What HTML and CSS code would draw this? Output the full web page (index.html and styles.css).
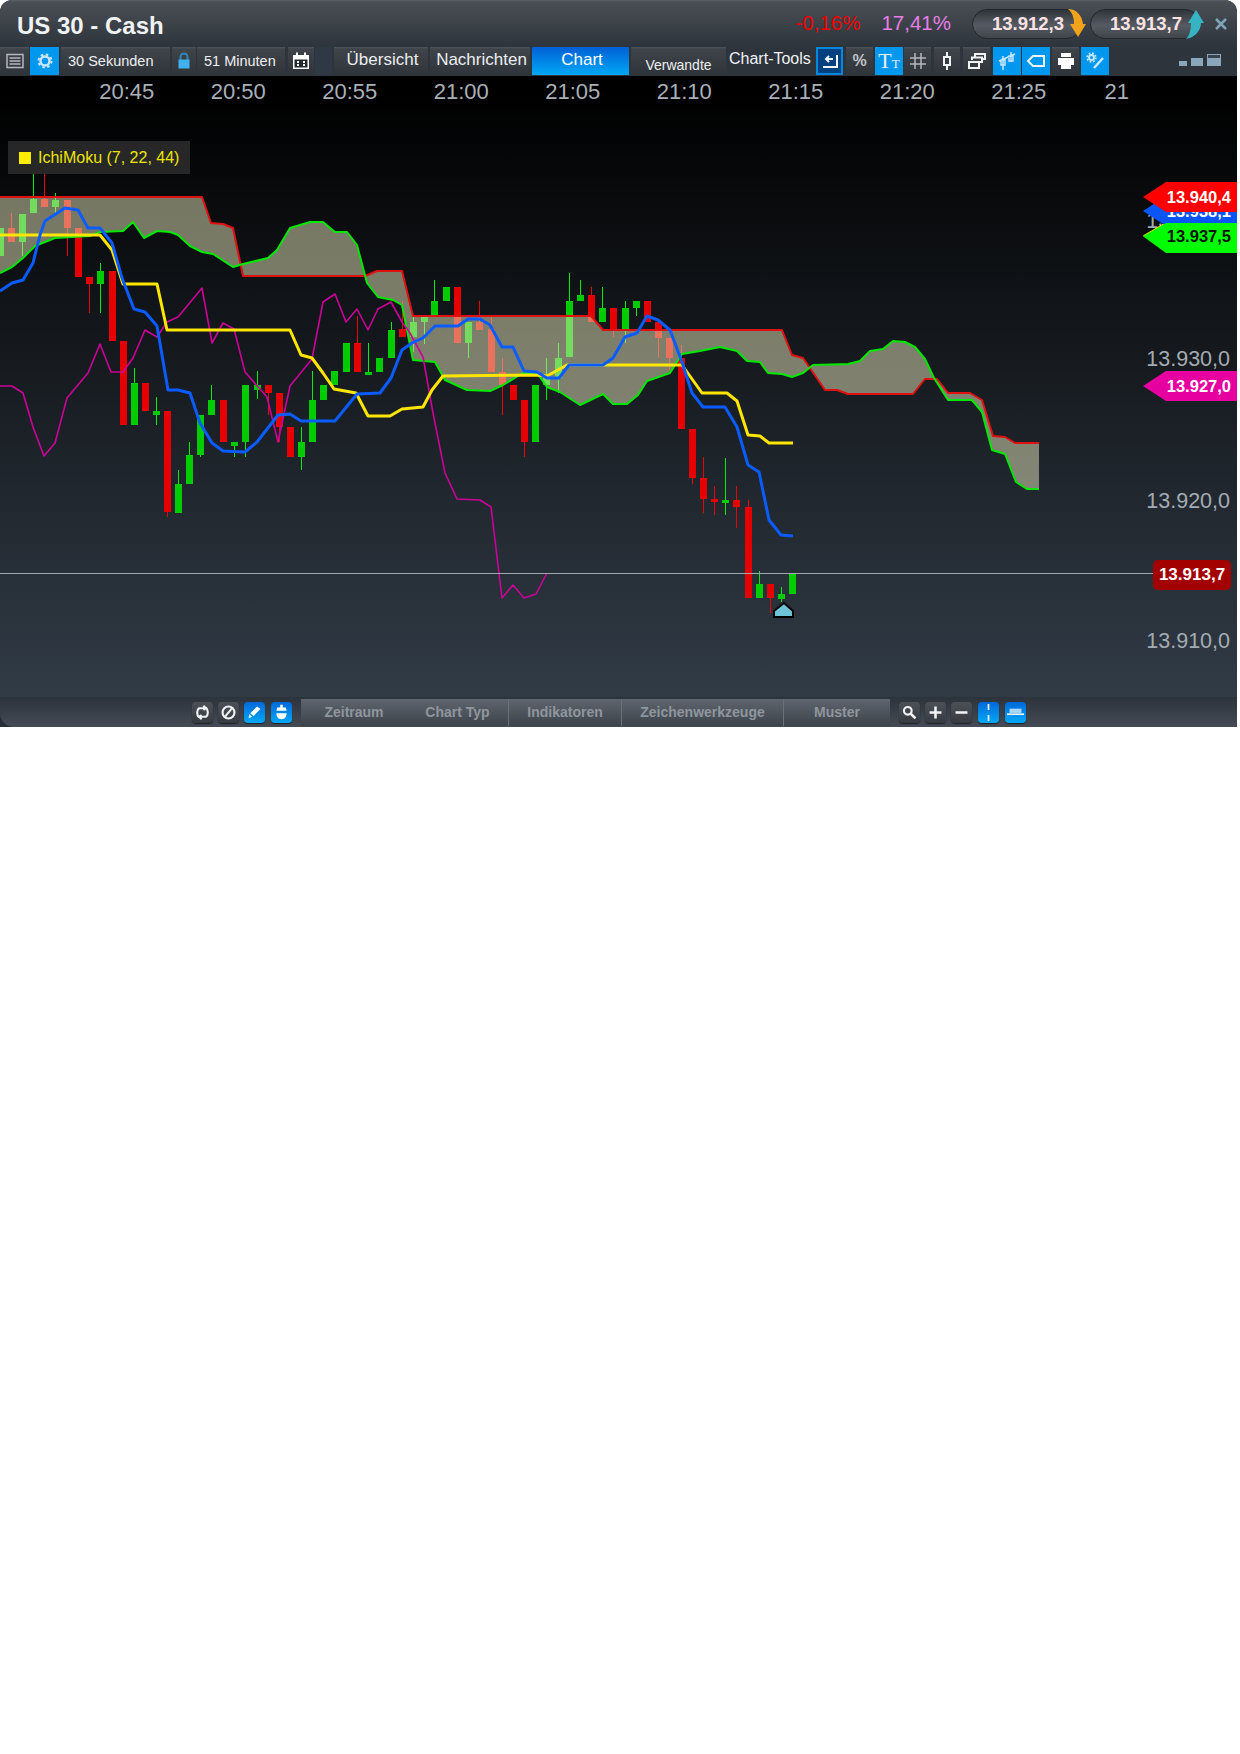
FILE: index.html
```html
<!DOCTYPE html>
<html lang="de">
<head>
    <meta charset="UTF-8">
    <title>US 30 - Cash</title>
    <link rel="stylesheet" href="styles.css">
</head>
<body>
<div class="window">
    <header class="titlebar">
        <h1 class="title">US 30 - Cash</h1>
        <span class="change">-0,16%</span>
        <span class="percent">17,41%</span>
        <div class="pill pill-sell">
            13.912,3
            <svg class="pill-arrow" viewBox="0 0 18 30"><path class="arrow-sell" d="M0 0C8 0 14 6 15 15H18L10 28 2 15H6C6 8 4 3 0 0Z"/></svg>
        </div>
        <div class="pill pill-buy">
            13.913,7
            <svg class="pill-arrow" viewBox="0 0 18 30"><path class="arrow-buy" d="M10 1L18 14H15C15 22 8 29 0 30 4 26 5 20 5 14H2Z"/></svg>
        </div>
        <svg class="close" viewBox="0 0 12 12"><path d="M1 1L11 11M11 1L1 11"/></svg>
    </header>

    <nav class="toolbar">
        <div class="btn w29">
            <svg class="ico ico-grey" viewBox="0 0 20 20"><path d="M2 3.500H18V16.500H2ZM4.500 7H15.500M4.500 10H15.500M4.500 13H15.500"/></svg>
        </div>
        <div class="btn w29 btn-blue ml1">
            <svg class="ico ico-pale" viewBox="0 0 20 20"><circle class="thick" cx="10" cy="10" r="4.500"/><circle class="teeth" cx="10" cy="10" r="6.500"/></svg>
        </div>
        <div class="btn btn-sm w109 ml2">30 Sekunden</div>
        <div class="btn w24 ml2">
            <svg class="ico" viewBox="0 0 20 20"><path class="shackle" d="M6.500 9V6A3.500 3.500 0 0 1 13.500 6V9"/><rect class="lock" x="4.500" y="8.500" width="11" height="9"/></svg>
        </div>
        <div class="btn btn-sm w88 ml1">51 Minuten</div>
        <div class="btn w26 ml3">
            <svg class="ico" viewBox="0 0 20 20"><path class="solid" d="M2 4H18V18H2Z"/><path class="cut" d="M3.500 8.500H16.500V16.500H3.500ZM6 2V5M14 2V5"/><path class="solid-line" d="M6 1.500V5M14 1.500V5M6 11H8M12 11H14M6 14H8M12 14H14"/></svg>
        </div>
        <div class="spacer"></div>
        <div class="btn btn-tab w94 ml2">Übersicht</div>
        <div class="btn btn-tab w100 ml2">Nachrichten</div>
        <div class="btn btn-tab btn-active w97 ml2">Chart</div>
        <div class="btn btn-low w95 ml2">Verwandte</div>
        <span class="tools-label">Chart-Tools</span>

        <div class="btn w27 btn-dark">
            <svg class="ico" viewBox="0 0 20 20"><path d="M3 16H17V4M13 8H6M9 5L6 8 9 11"/></svg>
        </div>
        <div class="btn w27 ml3 btn-pct">%</div>
        <div class="btn w28 ml2 btn-blue btn-type">T<small>T</small></div>
        <div class="btn w27 ml1">
            <svg class="ico ico-grey" viewBox="0 0 20 20"><path d="M7 2V18M13 2V18M2 7H18M2 13H18"/></svg>
        </div>
        <div class="btn w26 ml3">
            <svg class="ico" viewBox="0 0 20 20"><path d="M10 1V6M10 14V19M7 6H13V14H7Z"/></svg>
        </div>
        <div class="btn w27 ml3">
            <svg class="ico" viewBox="0 0 20 20"><path d="M8 5.500V3H18V8H15M5 9V6.500H15V11H12M2 11H12V17H2Z"/></svg>
        </div>
        <div class="btn w28 ml3 btn-blue">
            <svg class="ico ico-pale ico-thin" viewBox="0 0 20 20"><path d="M14 1V11M6 5V19M12 5H16V10H12ZM4 9H8V14H4ZM2 10L18 3"/></svg>
        </div>
        <div class="btn w28 ml1 btn-blue">
            <svg class="ico" viewBox="0 0 20 20"><path d="M7 5H18V15H7L2 10Z"/></svg>
        </div>
        <div class="btn w27 ml2">
            <svg class="ico ico-fill" viewBox="0 0 20 20"><path d="M5 2H15V6H5ZM2 7H18V14H2ZM5 12H15V18H5Z"/></svg>
        </div>
        <div class="btn w28 ml2 btn-blue">
            <svg class="ico ico-pale" viewBox="0 0 20 20"><circle cx="6.500" cy="6.500" r="2.500"/><circle class="teeth-sm" cx="6.500" cy="6.500" r="4.400"/><path class="thick" d="M18 7L9 17"/></svg>
        </div>
        <div class="win-controls">
            <span class="win-min"></span>
            <span class="win-mid"></span>
            <span class="win-max"></span>
        </div>
    </nav>

    <main class="chart">
        <svg id="plot" class="plot" viewBox="0 76 1237 621"></svg>

        <div class="times">
            <span>20:45</span><span>20:50</span><span>20:55</span><span>21:00</span><span>21:05</span>
            <span>21:10</span><span>21:15</span><span>21:20</span><span>21:25</span><span class="time-cut">21</span>
        </div>

        <div class="legend"><i class="legend-mark"></i>IchiMoku (7, 22, 44)</div>

        <span class="price p940">13.940,0</span>
        <span class="price p930">13.930,0</span>
        <span class="price p920">13.920,0</span>
        <span class="price p910">13.910,0</span>

        <div class="tag tag-yellow"></div>
        <div class="tag tag-blue">13.938,1</div>
        <div class="tag tag-green">13.937,5</div>
        <div class="tag tag-red">13.940,4</div>
        <div class="tag tag-pink">13.927,0</div>
        <div class="last-price">13.913,7</div>
    </main>

    <footer class="bottombar">
        <div class="btn-round">
            <svg class="ico" viewBox="0 0 20 20"><path class="thick" d="M6 16C3 13 3 7 6 5H12M14 4C17 7 17 13 14 15H8M11 2L14 5 11 7M9 13L6 15 9 18"/></svg>
        </div>
        <div class="btn-round">
            <svg class="ico" viewBox="0 0 20 20"><circle class="thick" cx="10" cy="10" r="7"/><path class="thick" d="M15 4L5 16"/></svg>
        </div>
        <div class="btn-round btn-round-blue gap6">
            <svg class="ico ico-fill" viewBox="0 0 20 20"><path d="M13 3L17 6 9 14 5 11ZM4 12L7 15 3 17Z"/></svg>
        </div>
        <div class="btn-round btn-round-blue gap6">
            <svg class="ico ico-fill" viewBox="0 0 20 20"><path d="M8.500 1H11.500V4H15L16 8H4L5 4H8.500ZM4 11H16C16 15 14 18 10 18 6 18 4 15 4 11Z"/></svg>
        </div>

        <div class="tabs">
            <span class="tab w106">Zeitraum</span>
            <span class="tab tab-line w102">Chart Typ</span>
            <span class="tab tab-line w113">Indikatoren</span>
            <span class="tab tab-line w162">Zeichenwerkzeuge</span>
            <span class="tab w106">Muster</span>
        </div>

        <div class="btn-round">
            <svg class="ico" viewBox="0 0 20 20"><circle class="thick" cx="8" cy="8" r="4.500"/><path class="thicker" d="M11.500 11.500L17 17"/></svg>
        </div>
        <div class="btn-round">
            <svg class="ico" viewBox="0 0 20 20"><path class="thicker" d="M10 3V17M3 10H17"/></svg>
        </div>
        <div class="btn-round gap6">
            <svg class="ico" viewBox="0 0 20 20"><path class="thicker" d="M3 10H17"/></svg>
        </div>
        <div class="btn-round btn-round-blue gap6">
            <svg class="ico" viewBox="0 0 20 20"><path d="M10 0V7M10 13V20"/></svg>
        </div>
        <div class="btn-round btn-round-blue">
            <svg class="ico" viewBox="0 0 20 20"><path d="M0 12H20"/><path class="pale-bar" d="M3 8H17"/></svg>
        </div>
    </footer>
</div>
<script src="chart.js"></script>
</body>
</html>
```

FILE: styles.css
```css
* {
    box-sizing: border-box;
}
body {
    margin: 0;
    background-color: white;
    font-family: "Liberation Sans", Arial, sans-serif;
}
.window {
    width: 1237px;
    height: 727px;
    display: flex;
    flex-direction: column;
    background-color: #272d34;
    border-radius: 12px 12px 0 0;
    overflow: hidden;
}

/* title row */
.titlebar {
    height: 47px;
    flex: none;
    display: flex;
    align-items: center;
    padding: 0 10px 0 17px;
    background: linear-gradient(#5c6168 0, #4a4f56 2px, #2e343b 100%);
}
.title {
    margin: 4px auto 0 0;
    font-size: 24px;
    font-weight: bold;
    color: #f0f2f4;
}
.change, .percent {
    margin-bottom: 2px;
    font-size: 20.5px;
}
.change {
    color: #f00000;
}
.percent {
    margin-left: 21px;
    color: #e67ee6;
}
.pill {
    position: relative;
    width: 110px;
    height: 30px;
    margin-left: 8px;
    padding-left: 19px;
    border: 1px solid #22272c;
    border-radius: 15px;
    background: linear-gradient(#30353b, #565b63 55%, #40454c);
    font-size: 18.5px;
    font-weight: bold;
    line-height: 28px;
    color: #fbe3e3;
}
.pill-sell {
    margin-left: 21px;
}
.pill-arrow {
    position: absolute;
    right: -5px;
    top: -1px;
    width: 18px;
    height: 30px;
}
.arrow-sell {
    fill: #f2a31c;
}
.arrow-buy {
    fill: #37b4c4;
}
.close {
    width: 12px;
    height: 12px;
    margin-left: 15px;
    fill: none;
    stroke: #7fa3bb;
    stroke-width: 2.5;
}

/* toolbar */
.toolbar {
    height: 29px;
    flex: none;
    display: flex;
    padding-bottom: 1px;
    background-color: #2d343c;
}
.btn {
    height: 28px;
    flex: none;
    display: flex;
    align-items: center;
    justify-content: center;
    background: linear-gradient(#50555c 0, #3f444b 2px, #2f343a);
    color: #eceef0;
}
.btn-sm {
    justify-content: flex-start;
    padding-left: 7px;
    font-size: 14.5px;
}
.btn-tab {
    font-size: 17px;
    padding: 0 0 2px 3px;
}
.btn-low {
    font-size: 14px;
    padding-top: 7px;
}
.btn-blue {
    background: #0098ee;
}
.btn-active {
    background: linear-gradient(#0060d4, #00a8f6);
    color: white;
}
.btn-dark {
    background: #03407f;
    border: 2px solid #0088dd;
}
.btn-pct {
    font-size: 16px;
    font-weight: bold;
    color: #bfc3c7;
}
.btn-type {
    font-family: "Liberation Serif", serif;
    font-size: 22px;
}
.btn-type small {
    font-size: 13px;
    margin-top: 5px;
}
.tools-label {
    width: 90px;
    flex: none;
    padding: 3px 0 0 3px;
    font-size: 16px;
    white-space: nowrap;
    color: #f0f2f4;
}
.spacer {
    width: 17px;
    margin-left: 1px;
    background-color: #2e3945;
}
.win-controls {
    display: flex;
    align-items: flex-end;
    gap: 4px;
    margin-left: 70px;
    padding-bottom: 9px;
}
.win-min {
    width: 8px;
    height: 5px;
    background-color: #8aa6bb;
}
.win-mid {
    width: 12px;
    height: 8px;
    background-color: #8aa6bb;
}
.win-max {
    width: 14px;
    height: 12px;
    background: linear-gradient(#39424b 0, #39424b 30%, #8aa6bb 30%);
    border: 1px solid #8aa6bb;
}

.w24 { width: 24px; }
.w26 { width: 26px; }
.w27 { width: 27px; }
.w28 { width: 28px; }
.w29 { width: 29px; }
.w88 { width: 88px; }
.w94 { width: 94px; }
.w95 { width: 95px; }
.w97 { width: 97px; }
.w100 { width: 100px; }
.w102 { width: 102px; }
.w106 { width: 106px; }
.w109 { width: 109px; }
.w113 { width: 113px; }
.w162 { width: 162px; }
.ml1 { margin-left: 1px; }
.ml2 { margin-left: 2px; }
.ml3 { margin-left: 3px; }

/* icons */
.ico {
    width: 20px;
    height: 20px;
    fill: none;
    stroke: #f0f2f4;
    stroke-width: 2;
}
.ico-grey {
    stroke: #b4b8bc;
    stroke-width: 1.500;
}
.ico-pale {
    stroke: #c9e6fb;
}
.ico-thin {
    stroke-width: 1.500;
}
.ico-fill {
    fill: white;
    stroke: none;
}
.teeth {
    stroke-width: 2;
    stroke-dasharray: 2.550 2.550;
}
.teeth-sm {
    stroke-width: 1.600;
    stroke-dasharray: 1.730 1.730;
}
.shackle {
    stroke: #2f86c0;
}
.lock {
    fill: #3fb2ee;
    stroke: none;
}
.solid {
    fill: white;
    stroke: none;
}
.cut {
    fill: #23282e;
    stroke: none;
}
.solid-line {
    stroke: white;
}
.thick {
    stroke-width: 2.500;
}
.thicker {
    stroke-width: 3;
}
.pale-bar {
    stroke: #a9d8f6;
    stroke-width: 5;
}

/* chart */
.chart {
    position: relative;
    flex: 1;
    background: linear-gradient(#000 0, #000 3%, #313b46 100%);
}
.plot {
    position: absolute;
    left: 0;
    top: 0;
    width: 1237px;
    height: 621px;
}
.times {
    position: relative;
    display: grid;
    grid-template-columns: repeat(10, 111.500px);
    padding: 4px 0 0 71px;
    font-size: 22px;
    line-height: 24px;
    text-align: center;
    color: #a9b0b7;
}
.time-cut {
    padding-left: 30px;
    text-align: left;
}
.legend {
    position: absolute;
    left: 8px;
    top: 65px;
    width: 182px;
    height: 33px;
    display: flex;
    align-items: center;
    padding-left: 11px;
    background-color: #272727;
    font-size: 16px;
    color: #ece400;
}
.legend-mark {
    width: 12px;
    height: 12px;
    margin-right: 7px;
    background-color: #ffee00;
}
.price {
    position: absolute;
    right: 7px;
    font-size: 21.500px;
    line-height: 24px;
    color: #a4abb2;
}
.p940 { top: 133px; }
.p930 { top: 271px; }
.p920 { top: 413px; }
.p910 { top: 553px; }

.tag {
    position: absolute;
    left: 1143px;
    width: 94px;
    height: 30px;
    padding-right: 6px;
    text-align: right;
    font-size: 16.500px;
    font-weight: bold;
    line-height: 30px;
    color: white;
    clip-path: polygon(0 50%, 23px 0, 100% 0, 100% 100%, 23px 100%);
}
.tag-red {
    top: 106px;
    background-color: #ff0000;
}
.tag-blue {
    top: 120px;
    background-color: #0a55f5;
}
.tag-yellow {
    top: 146px;
    background-color: #ffe600;
    clip-path: polygon(0 45%, 23px 0, 100% 0, 100% 100%, 23px 100%);
}
.tag-green {
    top: 147px;
    background-color: #00ff00;
    color: #0a140a;
    line-height: 26px;
    clip-path: polygon(0 44%, 23px 0, 100% 0, 100% 100%, 23px 100%);
}
.tag-pink {
    top: 295px;
    background-color: #e600a0;
}
.last-price {
    position: absolute;
    left: 1153px;
    top: 484px;
    width: 78px;
    height: 30px;
    border-radius: 5px;
    background-color: #a30000;
    text-align: center;
    font-size: 17px;
    font-weight: bold;
    line-height: 30px;
    color: white;
}

/* chart drawing */
.wick {
    stroke-width: 1;
    shape-rendering: crispEdges;
}
.body {
    stroke: none;
    shape-rendering: crispEdges;
}
.wick.up { stroke: #00f000; }
.wick.down { stroke: #f00000; }
.body.up { fill: #00cc00; }
.body.down { fill: #e60000; }
.cloud {
    fill: rgba(235, 235, 190, .49);
    stroke: none;
}
.line {
    fill: none;
    stroke-linejoin: round;
}
.senkou-a { stroke: #e01010; stroke-width: 2; }
.senkou-b { stroke: #00e800; stroke-width: 2; }
.kijun { stroke: #ffe600; stroke-width: 3; }
.tenkan { stroke: #0a5cff; stroke-width: 3; }
.chikou { stroke: #cc0099; stroke-width: 1.600; }
.last-line { stroke: #a0a7ae; stroke-width: 1; shape-rendering: crispEdges; }
.marker { fill: #6ec3d6; stroke: #000; stroke-width: 2; }

/* bottom bar */
.bottombar {
    height: 30px;
    flex: none;
    display: flex;
    align-items: center;
    padding-left: 192px;
    background: linear-gradient(#2c333b, #454b54);
    border-bottom-left-radius: 14px;
}
.btn-round {
    width: 21px;
    height: 21px;
    flex: none;
    display: flex;
    align-items: center;
    justify-content: center;
    margin-right: 5px;
    border-radius: 4px;
    background: linear-gradient(#4c5158, #363b41);
    box-shadow: 0 1px 1px #1e2227;
}
.btn-round .ico {
    width: 17px;
    height: 17px;
}
.btn-round-blue {
    background: linear-gradient(#0068da, #00a8f6);
}
.gap6 {
    margin-right: 6px;
}
.tabs {
    height: 27px;
    display: flex;
    align-self: flex-start;
    margin: 2px 9px 0 3px;
    background: linear-gradient(#5f656e, #3d434a);
}
.tab {
    display: flex;
    align-items: center;
    justify-content: center;
    padding-bottom: 2px;
    font-size: 14px;
    font-weight: bold;
    color: #8f969d;
}
.tab-line {
    border-right: 1px solid #6a7078;
}
```

FILE: chart.js
```js
// x, wick top, body top, body bottom, wick bottom (page pixels)
const greens = [
    [0,228,228,256,256], [22,214,214,242,256], [33,174,199,213,213], [55,193,200,207,213],
    [100,263,271,284,313], [134,368,383,425,425], [156,397,411,415,425], [178,470,484,513,513],
    [189,442,455,484,484], [200,415,415,455,457], [211,385,400,415,415], [234,442,442,446,457],
    [245,385,385,442,457], [257,371,385,390,399], [301,427,442,457,470], [312,371,400,442,442],
    [323,385,385,400,400], [334,371,371,385,385], [346,343,343,372,372], [368,343,372,375,375],
    [379,358,358,372,372], [391,322,330,358,358], [413,317,322,337,352], [424,317,317,322,344],
    [434,280,301,316,316], [446,287,287,301,301], [468,322,322,343,358], [535,385,385,442,442],
    [546,358,378,385,400], [558,343,358,378,393], [569,273,301,357,357], [580,280,295,301,301],
    [602,287,308,322,322], [625,301,308,330,343], [636,301,301,308,316], [725,458,500,503,515],
    [759,571,584,598,598], [781,587,594,599,602], [792,573,573,594,594]
];
const reds = [
    [11,213,228,242,242], [44,174,199,207,207], [67,200,200,228,256], [78,228,228,277,277],
    [89,277,277,284,313], [112,271,271,341,341], [123,341,341,425,425], [145,383,383,411,411],
    [167,411,411,512,517], [223,400,400,442,442], [268,385,385,393,415], [279,393,393,427,442],
    [290,427,427,457,457], [357,316,343,372,372], [402,301,329,337,337], [457,287,287,343,343],
    [479,301,322,330,330], [491,317,329,372,372], [502,358,372,385,415], [513,385,385,400,400],
    [524,400,400,442,457], [591,287,295,322,322], [613,308,308,330,337], [647,301,301,322,322],
    [658,322,322,338,358], [669,338,338,358,370], [681,345,358,429,429], [692,429,429,478,484],
    [703,457,478,499,513], [714,486,499,502,515], [736,486,500,507,528], [748,500,507,598,598],
    [770,584,584,598,613]
];

const senkouA = "0,197 202,197 211,223 223,224 233,228 243,276 365,276 377,271 402,271 413,316 591,316 603,330 782,330 792,355 803,358 825,390 837,390 848,394 913,394 925,379 937,379 948,393 970,393 982,400 993,436 1005,437 1015,443 1039,443";
const senkouB = "0,273 12,267 23,258 35,246 55,238 90,236 100,232 123,231 133,222 144,238 157,231 170,232 178,235 190,246 202,252 213,254 233,267 243,264 268,258 277,250 290,228 310,222 323,222 335,232 347,232 357,245 367,283 378,297 393,300 402,305 413,360 435,362 445,380 467,390 490,391 503,385 523,373 537,373 547,387 560,392 580,405 603,394 613,404 627,404 638,395 647,381 670,373 682,354 700,351 720,347 737,351 747,361 760,362 768,373 782,374 792,377 803,373 813,365 848,364 860,361 870,351 883,349 893,341 905,342 915,347 925,359 934,378 948,400 972,400 982,412 992,450 1005,454 1016,482 1027,489 1039,489";
const kijun = "0,235 100,235 112,250 123,284 157,284 167,330 290,330 301,355 312,358 323,373 334,389 356,393 368,416 390,416 402,409 423,407 432,390 443,376 537,375 547,376 567,365 682,365 702,393 727,393 737,401 748,435 760,436 769,443 793,443";
const tenkan = "0,291 12,283 23,280 33,263 40,235 45,221 65,208 78,210 88,228 100,228 112,243 122,278 134,309 145,312 157,326 168,390 178,390 190,393 200,423 212,443 223,451 245,452 257,442 278,415 290,414 301,421 335,421 357,394 380,393 391,378 402,350 412,343 423,338 435,326 458,326 468,319 480,319 490,325 502,347 513,347 524,371 537,372 547,378 559,378 569,365 603,365 613,358 625,337 637,333 647,316 658,320 670,330 682,362 692,393 703,407 725,407 737,427 748,465 759,472 769,520 781,535 793,536";
const chikou = "0,386 12,386 23,393 33,427 44,456 55,443 67,398 88,373 100,344 111,372 123,372 133,358 145,330 157,337 167,322 178,317 202,288 212,343 223,323 234,329 245,372 267,397 278,442 290,386 312,359 323,302 335,294 346,322 357,309 368,330 378,309 391,302 402,322 410,333 423,357 433,413 445,473 457,499 480,500 491,507 502,598 513,585 524,598 536,594 547,573";

const plot = document.getElementById("plot");

function add(tag, className, attrs) {
    const el = document.createElementNS("http://www.w3.org/2000/svg", tag);
    el.setAttribute("class", className);
    for (const key in attrs) el.setAttribute(key, attrs[key]);
    plot.appendChild(el);
}

function drawCandles(list, dir) {
    let wicks = "";
    let bodies = "";
    list.forEach(([x, high, top, bottom, low]) => {
        wicks += `M${x + .5} ${high}V${low}`;
        bodies += `M${x - 3} ${top}h7V${bottom}h-7z`;
    });
    add("path", `wick ${dir}`, { d: wicks });
    add("path", `body ${dir}`, { d: bodies });
}

drawCandles(greens, "up");
drawCandles(reds, "down");

// the cloud sits over the candles, that is why they look pale inside it
const backwards = senkouB.split(" ").reverse().join(" ");
add("polygon", "cloud", { points: senkouA + " " + backwards });
add("polyline", "line senkou-a", { points: senkouA });
add("polyline", "line senkou-b", { points: senkouB });
add("polyline", "line chikou", { points: chikou });
add("polyline", "line kijun", { points: kijun });
add("polyline", "line tenkan", { points: tenkan });
add("path", "last-line", { d: "M0 573.500H1153" });
add("path", "marker", { d: "M774 617V611L784 603 793 611V617Z" });
```
